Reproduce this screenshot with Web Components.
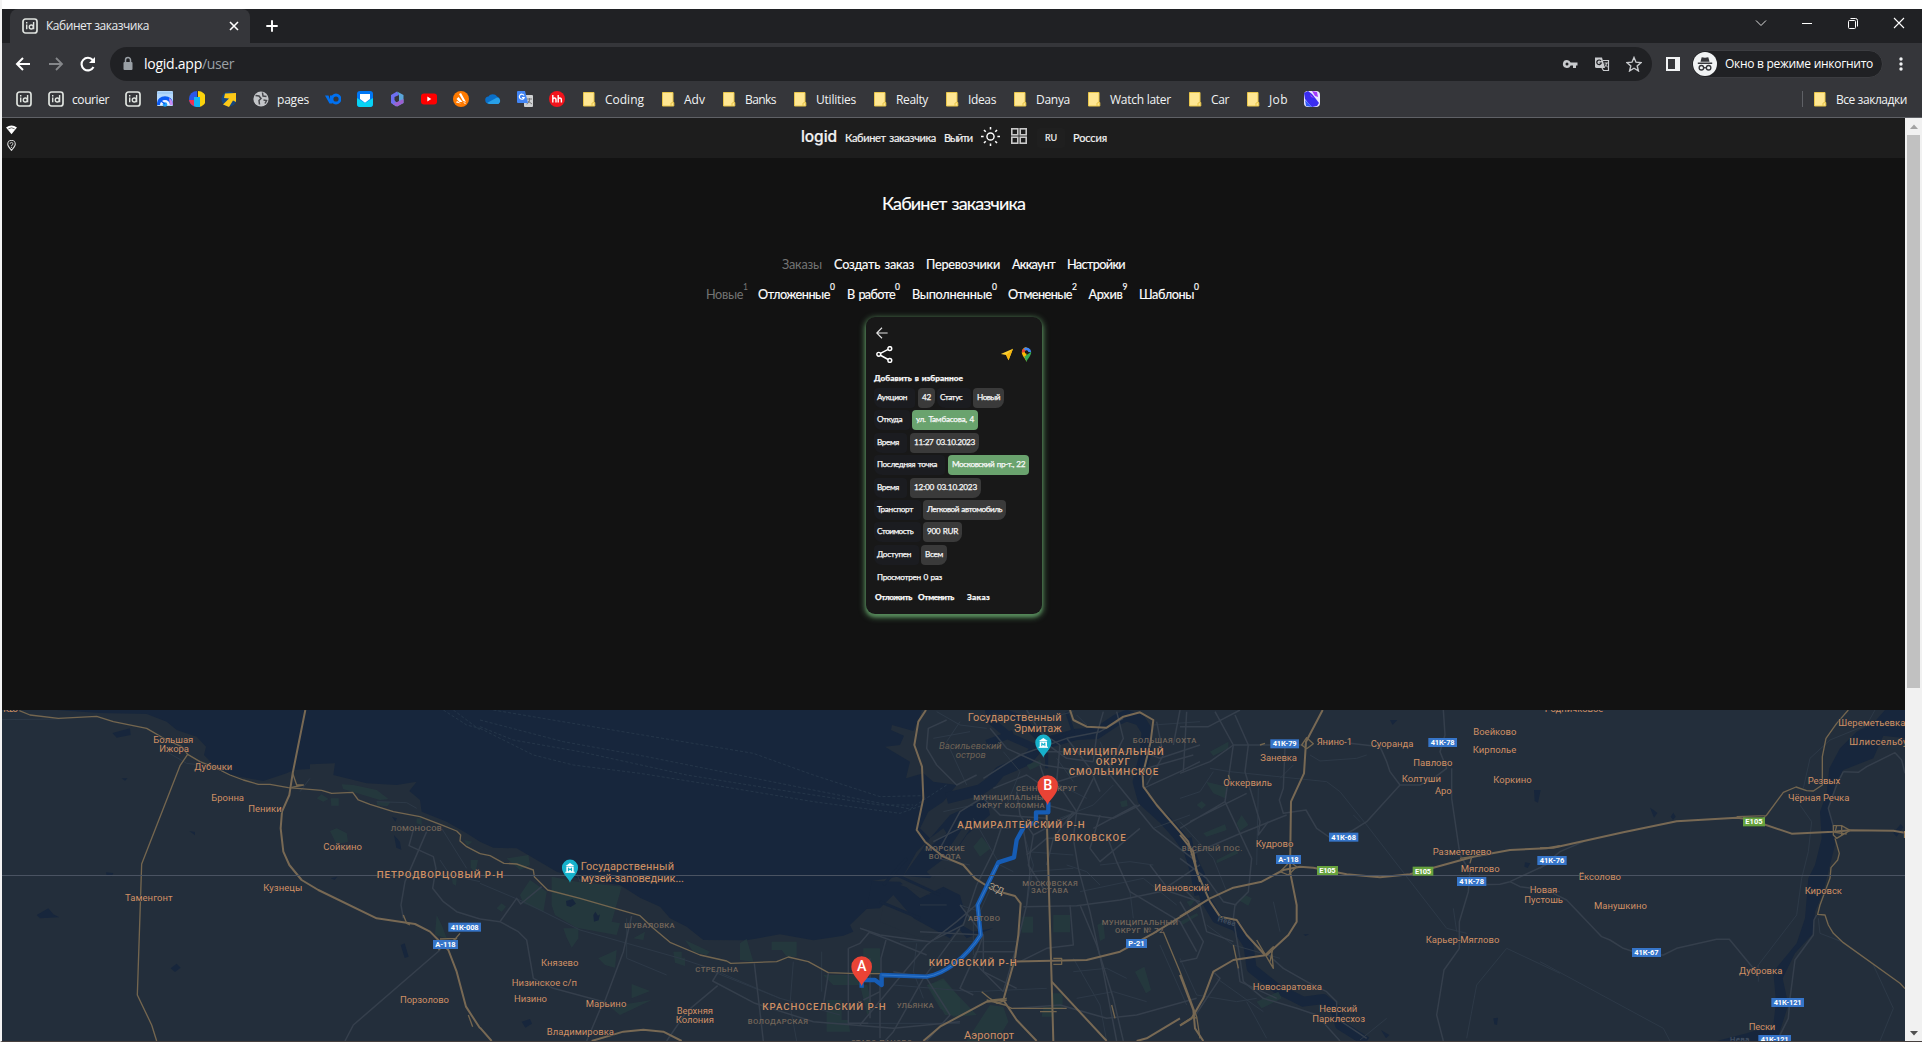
<!DOCTYPE html>
<html lang="ru">
<head>
<meta charset="utf-8">
<title>Кабинет заказчика</title>
<style>
html,body{margin:0;height:100%;overflow:hidden;background:#fff}
body{font-family:"Open Sans","Noto Sans",sans-serif}
</style>
</head>
<body>
<app-window></app-window>
<script>
const define=(name,html,after)=>customElements.define(name,class extends HTMLElement{
  connectedCallback(){
    if(this.shadowRoot)return;
    this.attachShadow({mode:'open'}).innerHTML=typeof html==='function'?html(this):html;
    if(after)after(this,this.shadowRoot);
  }
});

/* Text run that tracks its letters to fill a given width */
define('fit-text',el=>`<style>:host{display:inline-block;white-space:nowrap;flex:none;width:${el.getAttribute('w')}px}span{display:inline-block;white-space:nowrap}</style><span><slot></slot></span>`,
(el,root)=>{
  const s=root.querySelector('span'),w=+el.getAttribute('w');
  s.style.letterSpacing='0';
  const n=s.getBoundingClientRect().width;
  s.style.letterSpacing=((w-n)/el.textContent.trim().length)+'px';
});

const ID='<rect x="1" y="1" width="14" height="14" rx="2.5" fill="none" stroke="#dfe3df" stroke-width="1.7"/><g stroke="#dfe3df" stroke-width="1.4" fill="none"><path d="M4.7 6.5v4.8M4.7 4v1.4M11.6 4v7.3"/><circle cx="9.3" cy="9" r="2"/></g>';
const ICONS={
 id:ID,
 cloud:'<rect width="16" height="15" rx="1" fill="#b5d8fb"/><path d="M0 2h16" stroke="#8ec2f4"/><path d="M0 12a7.6 6.5 0 0 1 16 0v2h-4a4 4 0 0 0-8 0H0z" fill="#0b5cf5"/><path d="M13 14a5 5 0 0 0-10 0z" fill="#eef3ff"/><path d="M12 7a8 8 0 0 1 4 7l-3 0z" fill="#c98df2"/><circle cx="8" cy="13.5" r="2.3" fill="#1fa0f5"/><path d="M8 13 4 10" stroke="#0b5cf5" stroke-width="1.4"/>',
 pie:'<path d="M8 0a8 8 0 1 0 0 16z" fill="#2a57e8"/><path d="M9 0a8 8 0 0 1 0 16z" fill="#fbd30c"/><path d="M5 6h6v10a8 8 0 0 1-6-1z" fill="#12b4f2"/><path d="M0 9h5v6A8 8 0 0 1 0 9z" fill="#f03050"/>',
 arrow:'<circle cx="8" cy="8" r="7.6" fill="#16467e"/><path d="M4 2.500 15 2 15 11 12 9.500 8 16 2 13.500 8 7.500 3 7z" fill="#fcc918"/>',
 globe:'<circle cx="8" cy="8" r="7.6" fill="#c3c5c8"/><path d="M2.500 4.500 6 5l2 2.500-2 2 .5 4M9.500 1.500 10 5l3.500.5M10.500 9l3 .5-1.500 3" fill="none" stroke="#46474b" stroke-width="1.500"/>',
 yo:'<path d="M0 4.5h3.5l1.5 4v-4h2.5v8H4.500z" fill="#0070f0"/><circle cx="11" cy="8" r="4" fill="none" stroke="#0070f0" stroke-width="2.8"/>',
 mail:'<rect width="16" height="16" rx="3" fill="#0077f5"/><path d="M0 7l8 5 8-5v6a3 3 0 0 1-3 3H3a3 3 0 0 1-3-3z" fill="#08d3f4"/><path d="M3 3h10v5l-5 3.800L3 8z" fill="#fff"/>',
 m365:'<path d="M8 .5 2 4v8l5 3.500V11L5.500 9V6L10 4z" fill="#6d6ff0"/><path d="M8 .5 14.500 4v8L8 15.500 4 13l6-3V4z" fill="#5aa5d8"/><path d="M14.500 8v4L8 15.500 4 13l6-3z" fill="#9d5fd0"/><path d="M7 7l3-2v5l-3 1z" fill="#35363a"/>',
 yt:'<rect y="2.500" width="16" height="11" rx="3" fill="#f00"/><path d="M6.300 5.500v5l4-2.500z" fill="#fff"/>',
 avast:'<circle cx="8" cy="8" r="8" fill="#ff7a00"/><path d="M6 3l2-1 5 9-3-1zM3.500 8l2-2 4 5-3 0zM3 11.500l1-1.500 4 2.500zM10 11l3 1-1 1z" fill="#fff"/>',
 onedrive:'<path d="M4 12.500a3.500 3.500 0 0 1-.5-7A5 5 0 0 1 12 5.500a4 4 0 0 1 1.500 7z" fill="#0a6fc8"/><path d="M2 12 12 6.500a3.500 3.500 0 0 1 1.500 6.500H4z" fill="#28a0e8"/>',
 gt:'<rect x="7" y="4" width="9" height="12" rx="1" fill="#cfd1d3"/><path d="M10 8h5M12.500 7v2c0 2-2 4-3 4M11 10l4 3" stroke="#777" fill="none"/><path d="M0 1a1 1 0 0 1 1-1h7l3 12H1a1 1 0 0 1-1-1z" fill="#4285f4"/><path d="M7 4.500A2.500 2.500 0 1 0 7.200 6.500H5" stroke="#fff" fill="none" stroke-width="1.200"/>',
 hh:'<circle cx="8" cy="8" r="8" fill="#f2141c"/><path d="M3.800 4v7.500M3.800 9q0-2 1.600-2t1.600 2v2.500M9.200 4v7.500M9.200 9q0-2 1.600-2t1.600 2v2.500" stroke="#fff" stroke-width="1.400" fill="none"/>',
 folder:'<path d="M2.500 1.500h10.500v10h.8v3.500H2.500z" fill="#ffe793" stroke="#e9c64b"/><path d="M11 15v-3l2.500-.5" fill="none" stroke="#e9c64b"/>',
 swirl:'<rect width="16" height="16" rx="4" fill="#e9e5ff"/><path d="M0 2 4 0 8 3 12 8 15 12 13 15 8 16 4 12 1 8z" fill="#3a2cf0"/><path d="M8 0l5 1 1 5-3-1zM6 3l4 4-3-1z" fill="#a43bfa"/><path d="M1 9l4 4 3 3-6-1z" fill="#2f5bf8"/>',
 back:'<path d="M15 8H2M8 2 2 8l6 6" fill="none" stroke="currentColor" stroke-width="2"/>',
 fwd:'<path d="M1 8h13M8 2l6 6-6 6" fill="none" stroke="currentColor" stroke-width="1.800"/>',
 reload:'<path d="M13.500 11A6.300 6.300 0 1 1 12.700 4" fill="none" stroke="currentColor" stroke-width="2.100"/><path d="M15 1v6H9z" fill="currentColor"/>',
 lock:'<rect x="3.500" y="6" width="9" height="8" rx="1" fill="#9aa0a6"/><path d="M5.500 6V4a2.500 2.500 0 0 1 5 0v2" fill="none" stroke="#9aa0a6" stroke-width="1.500"/>',
 key:'<path d="M5 4a4 4 0 1 0 3.600 5.500H11V12h3V9.500h1.500v-3H8.600A4 4 0 0 0 5 4z" fill="#c8cacd"/><circle cx="5" cy="8" r="1.500" fill="#202124"/>',
 trans:'<path d="M1 1.500h7l3 10.500H2.500A1.500 1.500 0 0 1 1 10.500z" fill="#c8cacd"/><path d="M9 4.500h5.500v10H9.500L8 12" fill="none" stroke="#c8cacd" stroke-width="1.200"/><path d="M7 5A2.300 2.300 0 1 0 7.300 7H5.500" stroke="#202124" fill="none" stroke-width="1.200"/><path d="M10.500 7h3.500M12.500 7c0 2-1 3-2 4M11 8.500l3 3" stroke="#c8cacd" fill="none"/>',
 star:'<path d="M8 1.500l2 4.700 5 .4-3.800 3.300 1.200 5L8 12.200l-4.400 2.700 1.200-5L1 6.600l5-.4z" fill="none" stroke="#c8cacd" stroke-width="1.400"/>',
 panel:'<rect x="2" y="2" width="12" height="12" fill="none" stroke="#f1f3f4" stroke-width="2"/><path d="M10 2h4v12h-4z" fill="#f1f3f4"/>',
 dots:'<g fill="#f1f3f4"><circle cx="8" cy="3" r="1.700"/><circle cx="8" cy="8" r="1.700"/><circle cx="8" cy="13" r="1.700"/></g>',
 incog:'<circle cx="8" cy="8" r="8" fill="#f1f3f4"/><path d="M5 6.500 5.800 3.500l2.200.4 2.200-.4.800 3z" fill="#35363a"/><path d="M3.200 7.500h9.600" stroke="#35363a"/><g fill="none" stroke="#35363a" stroke-width=".9"><circle cx="5.600" cy="10.500" r="1.500"/><circle cx="10.400" cy="10.500" r="1.500"/><path d="M7 10.500h2"/></g>',
 close:'<path d="M4 4l8 8M12 4l-8 8" stroke="#fff" stroke-width="1.600"/>',
 plus:'<path d="M8 2.300v11.400M2.300 8h11.400" stroke="#fff" stroke-width="1.900"/>',
 chev:'<path d="M3 5.500l5 5 5-5" fill="none" stroke="#ddd"/>',
 min:'<path d="M3 8.500h10" stroke="#fff"/>',
 rest:'<rect x="3.500" y="5.500" width="7" height="8" rx="1" fill="none" stroke="#fff"/><path d="M5.500 3.500h5a2 2 0 0 1 2 2v6" fill="none" stroke="#fff"/>',
 x:'<path d="M3 3l10 10M13 3 3 13" stroke="#fff" stroke-width="1.100"/>',
 wifi:'<path d="M0 5q8-6 16 0L8 15z" fill="#fff"/><path d="M3.500 7q4.500-3 9 0" fill="none" stroke="#333"/>',
 loc:'<path d="M8 15C4 10 2.500 8.500 2.500 6a5.500 5.500 0 0 1 11 0c0 2.500-1.500 4-5.500 9z" fill="none" stroke="#ddd" stroke-width="1.500"/><path d="M6 5.500a2 2 0 1 1 2.500 2L8 9M8 10v1.500" fill="none" stroke="#ddd" stroke-width="1.300"/>',
 sun:'<circle cx="8" cy="8" r="3" fill="none" stroke="#fff" stroke-width="1.200"/><path d="M8 0v2.200M8 13.800V16M0 8h2.200M13.800 8H16M2.500 2.500 4 4M12 12l1.500 1.500M13.500 2.500 12 4M4 12l-1.500 1.500" stroke="#fff" stroke-width="1.300"/>',
 grid:'<g fill="none" stroke="#c9c9c9" stroke-width="1.600"><rect x=".8" y=".8" width="6" height="6"/><rect x="9.200" y=".8" width="6" height="6"/><rect x=".8" y="9.200" width="6" height="6"/><rect x="9.200" y="9.200" width="6" height="6"/></g>',
 share:'<g fill="none" stroke="#fff" stroke-width="1.400"><circle cx="2.600" cy="7.800" r="1.800"/><circle cx="13" cy="2.400" r="1.800"/><circle cx="13" cy="13.600" r="1.800"/><path d="M4.200 7 11.400 3.200M4.200 8.700l7.200 4"/></g>',
 left:'<path d="M15.500 8H1M8 1 1 8l7 7" fill="none" stroke="#e4e4e4" stroke-width="1.500"/>',
 nav:'<path d="M16 1 1 7.500l6.500 1.200L10.500 15z" fill="#fcd030"/><path d="M16 1 7.500 8.700 10.500 15z" fill="#f5b50f"/>',
 pin:'<path d="M8 16C7 12 3 9.500 3 5.500A5 5 0 0 1 8 .3z" fill="#fbbc04"/><path d="M3 6A5 5 0 0 1 5 1.500L8 5z" fill="#ea4335"/><path d="M5 1.500A5 5 0 0 1 13 5.500L8 5z" fill="#4285f4"/><path d="M13 5c0 5-4 7-5 11-1-3-1.800-4.500-2.500-5.500z" fill="#34a853"/><circle cx="8" cy="5.300" r="1.900" fill="#181818"/>',
 up:'<path d="M4 10.500 8 6l4 4.500z" fill="#a3a3a3"/>',
 down:'<path d="M4 6 8 10.500 12 6z" fill="#505050"/>'
};
define('ui-icon',el=>{const s=el.getAttribute('size')||16;return `<style>:host{display:block;flex:none;width:${s}px;height:${s}px}svg{display:block;width:100%;height:100%}</style><svg viewBox="0 0 16 16">${ICONS[el.getAttribute('name')]}</svg>`});

define('tab-strip',`<style>
:host{display:flex;height:34px;background:#202124;align-items:stretch;color:#e8eaed}
.tab{width:240px;margin-left:8px;background:#35363a;border-radius:8px 8px 0 0;display:flex;align-items:center;box-sizing:border-box;padding:0 8px 0 12px;font-size:12px}
fit-text{margin:-2px 0 0 8px}.tab ui-icon:last-child{margin-left:auto}
.new{margin:9px 0 0 14px}.win{margin-left:auto;display:flex;gap:30px;padding:6px 15px 0 0}
</style><div class="tab"><ui-icon name="id"></ui-icon><fit-text w="103">Кабинет заказчика</fit-text><ui-icon name="close"></ui-icon></div><ui-icon class="new" name="plus"></ui-icon>
<div class="win"><ui-icon name="chev"></ui-icon><ui-icon name="min"></ui-icon><ui-icon name="rest"></ui-icon><ui-icon name="x"></ui-icon></div>`);

define('tool-bar',`<style>
:host{display:flex;height:42px;background:#35363a;align-items:center;color:#fff;box-sizing:border-box;padding:0 13px 0 13px}
.omni{margin-left:14px;flex:1;height:34px;border-radius:17px;background:#202124;display:flex;align-items:center;font-size:14px;padding:0 10px 0 10px}
.omni fit-text{margin-top:-1px}
.path{color:#9aa0a6}.r{margin-left:auto;display:flex;gap:16px}
.pill{display:flex;align-items:center;height:26px;border-radius:14px;background:#202124;border:1px solid #3c3d41;padding:0 9px 0 1px;gap:8px;font-size:12px;margin:0 10px 0 10px}
</style><ui-icon name="back"></ui-icon><ui-icon name="fwd" style="margin-left:17px;color:#85878a"></ui-icon><ui-icon name="reload" style="margin-left:16px"></ui-icon>
<div class="omni"><ui-icon name="lock"></ui-icon><fit-text w="58" style="margin-left:8px">logid.app</fit-text><fit-text w="32" class="path">/user</fit-text><div class="r"><ui-icon name="key"></ui-icon><ui-icon name="trans"></ui-icon><ui-icon name="star"></ui-icon></div></div>
<ui-icon name="panel" style="margin-left:13px"></ui-icon><div class="pill"><ui-icon name="incog" size="24"></ui-icon><fit-text w="148" style="margin-top:-1px">Окно в режиме инкогнито</fit-text></div><ui-icon name="dots"></ui-icon>`);

define('book-mark',el=>`<style>:host{display:flex;align-items:center;gap:8px;flex:none;font-size:12px;color:#f1f3f4}</style><ui-icon name="${el.getAttribute('icon')}"></ui-icon>${el.hasAttribute('w')?`<fit-text w="${el.getAttribute('w')}">${el.getAttribute('label')}</fit-text>`:''}`);
const marks=[['id'],['id','courier',37],['id'],['cloud'],['pie'],['arrow'],['globe','pages',32],['yo'],['mail'],['m365'],['yt'],['avast'],['onedrive'],['gt'],['hh'],['folder','Coding',39],['folder','Adv',21],['folder','Banks',31],['folder','Utilities',40],['folder','Realty',32],['folder','Ideas',28],['folder','Danya',34],['folder','Watch later',61],['folder','Car',18],['folder','Job',19],['swirl']];
const bm=m=>`<book-mark icon="${m[0]}"${m[1]?` label="${m[1]}" w="${m[2]}"`:''}></book-mark>`;
define('bookmark-bar',()=>`<style>:host{display:flex;align-items:center;height:33px;padding:0 15px 4px 14px;gap:16px;background:#35363a;border-bottom:1px solid #5f6166;box-sizing:border-box}
.end{margin-left:auto;display:flex;gap:9px;align-items:center}.sep{width:1px;height:16px;background:#5f6166}</style>${marks.map(bm).join('')}<div class="end"><div class="sep"></div>${bm(['folder','Все закладки',71])}</div>`);

define('site-header',`<style>
:host{display:flex;height:40px;box-sizing:border-box;background:#1d1d1d;color:#f2f2f2;font:11px/16px Lato,"Open Sans",sans-serif;word-spacing:.1em;-webkit-text-stroke:.2px}
.st{display:flex;flex-direction:column;gap:5px;padding:6px 0 0 4px;width:795px;flex:none}
nav{display:flex;align-items:center}
.logo{font:500 15.500px/18px Inter,sans-serif;margin-top:-3px}
.ru{width:28px;height:20px;background:#1f1f1f;border-radius:3px;margin-left:10px;display:flex;align-items:center;justify-content:center;font-size:9px}
</style><div class="st"><ui-icon name="wifi" size="11"></ui-icon><ui-icon name="loc" size="11"></ui-icon></div>
<nav><fit-text class="logo" w="36">logid</fit-text><fit-text w="91" style="margin-left:8px">Кабинет заказчика</fit-text><fit-text w="28" style="margin-left:8px">Выйти</fit-text><ui-icon name="sun" size="19" style="margin:-4px 0 0 9px"></ui-icon><ui-icon name="grid" style="margin:-4px 0 0 11px"></ui-icon><div class="ru"><fit-text w="12">RU</fit-text></div><fit-text w="34" style="margin-left:8px">Россия</fit-text></nav>`);

const sub=[['Новые',37,1,3],['Отложенные',72,0,5,12],['В работе',48,0,5,12],['Выполненные',80,0,5,12],['Отмененые',64,2,5,11],['Архив',34,9,5,11.500],['Шаблоны',55,0,5,11.500]];
define('page-nav',()=>`<style>
:host{display:flex;flex-direction:column;color:#fff;font:12.700px/18px Lato,"Open Sans",sans-serif;width:1903px;word-spacing:.1em;-webkit-text-stroke:.15px}
h1{margin:34px 0 0 880px;font:400 18px/22px Lato,sans-serif;height:22px}
.a{display:flex;margin:41px 0 0 780px;height:18px}
.b{display:flex;margin:12px 0 0 704px;height:18px}.dim{color:#747474;-webkit-text-stroke:0}
.b div{display:flex}.b fit-text+fit-text{font-size:8.500px;line-height:9px;margin-top:-2px}
</style><h1><fit-text w="143">Кабинет заказчика</fit-text></h1>
<div class="a"><fit-text w="40" class="dim">Заказы</fit-text><fit-text w="80" style="margin-left:12px">Создать заказ</fit-text><fit-text w="74" style="margin-left:12px">Перевозчики</fit-text><fit-text w="43" style="margin-left:12px">Аккаунт</fit-text><fit-text w="58" style="margin-left:12px">Настройки</fit-text></div>
<div class="b">${sub.map((s,i)=>`<div class="${i?'':'dim'}" style="margin-left:${s[4]||0}px"><fit-text w="${s[1]}">${s[0]}</fit-text><fit-text w="${s[3]}">${s[2]}</fit-text></div>`).join('')}</div>`);

define('order-row',el=>{
  const c=el.getAttribute('cells').split(';').map(t=>t.split('|'));
  return `<style>:host{display:flex;height:20px}
  div{height:20px;line-height:19px;border-radius:4px;box-sizing:border-box}
  .l{background:#1b1c20;padding-left:3px}.v{background:#3a3a3a;padding-left:4px;border-bottom-right-radius:8px}.g{background:#6aa36e;padding-left:4px}.l{border-radius:4px 4px 4px 8px}</style>`
  +c.map(([k,t,w,tw,m])=>`<div class="${k}" style="width:${w}px;margin-left:${m||0}px"><fit-text w="${tw}">${t}</fit-text></div>`).join('');
});
define('order-card',`<style>
:host{display:block;box-sizing:border-box;width:176px;height:297px;margin:14px 0 0 864px;background:#181818;border-radius:9px;box-shadow:0 2px 6px 1px #5c9461,0 3px 3px #5c946180;padding:10px 8px;color:#f8f8f8;font:8.200px/12px Lato,"Open Sans",sans-serif;-webkit-text-stroke:.25px;word-spacing:.1em}
.t{display:flex;padding:0 2px;align-items:center}.t ui-icon:nth-child(2){margin-left:auto}
.rows{display:flex;flex-direction:column;gap:2.400px;margin-top:4px}b{font-weight:900}
.f{display:flex;margin-top:8px}
</style><ui-icon name="left" size="12" style="margin-left:2px"></ui-icon>
<div class="t" style="margin-top:7px"><ui-icon name="share" size="17"></ui-icon><ui-icon name="nav" size="13"></ui-icon><ui-icon name="pin" size="15" style="margin:0 -2px 0 6px"></ui-icon></div>
<b style="display:block;margin-top:9px;height:12px"><fit-text w="89">Добавить в избранное</fit-text></b>
<div class="rows">
<order-row cells="l|Аукцион|41|30;v|42|17|9|3;l|Статус|34|22|2;v|Новый|31|23|2"></order-row>
<order-row cells="l|Откуда|36|25;g|ул. Тамбасова, 4|66|58|2"></order-row>
<order-row cells="l|Время|33|22;v|11:27 03.10.2023|69|61|3"></order-row>
<order-row cells="l|Последняя точка|71|60;g|Московский пр-т., 22|81|73|3"></order-row>
<order-row cells="l|Время|33|22;v|12:00 03.10.2023|71|63|3"></order-row>
<order-row cells="l|Транспорт|47|36;v|Легковой автомобиль|83|75|2"></order-row>
<order-row cells="l|Стоимость|47|36;v|900 RUR|39|31|2"></order-row>
<order-row cells="l|Доступен|45|34;v|Всем|26|18|2"></order-row></div>
<div style="margin:6px 0 0 3px;height:12px"><fit-text w="65">Просмотрен 0 раз</fit-text></div>
<b class="f"><fit-text w="37" style="margin-left:1px">Отложить</fit-text><fit-text w="36" style="margin-left:6px">Отменить</fit-text><fit-text w="23" style="margin-left:13px">Заказ</fit-text></b>`);

/* Map. Tiles are drawn at three times the size, each in its own group. */
const T=(o,s)=>`<g transform="translate(${o} 705) scale(.33333)">${s}</g>`;
const P=(cls,...d)=>d.map(x=>`<path class="${cls}" d="M${x}"/>`).join('');
const L=(cls,list)=>list.map(([t,a,b,y])=>`<text class="${cls}" x="${a}" y="${y+(cls.includes('big')?11:9.500)}" textLength="${b-a}">${t}</text>`).join('');
const B=(c,list)=>list.map(([t,x,y,w])=>`<rect x="${x}" y="${y}" width="${w}" height="27" fill="${c}"/><text class="bd" x="${x+7}" y="${y+21}" textLength="${w-14}">${t}</text>`).join('');
const pin=(x,y,c,s,inner)=>`<g transform="translate(${x} ${y}) scale(${s})"><path d="M0 0C-4-16-31-32-31-58a31 31 0 0 1 62 0C31-32 4-16 0 0z" fill="${c}"/>${inner}</g>`;
const museum='<path d="M-17-63 0-75 17-63zM-14-61h28v22h-28z" fill="#fff"/><path d="M-6-43v-12L0-48 6-55v12" fill="none" stroke="#17b1cb" stroke-width="4"/><path d="M-18-39h36" stroke="#fff" stroke-width="4"/>';
define('route-map',()=>{
const water=T(0,`
<path fill="#17263c" d="M170 15 300 24 440 27 500 50 530 75 590 95 618 125 612 150 660 200 720 215 790 228 860 205 880 195 930 192 930 178 1005 175 1000 210 1100 235 1190 240 1250 230 1228 258 1260 285 1265 320 1340 350 1400 385 1440 410 1480 428 1550 430 1610 465 1670 500 1750 525 1860 540 1920 578 1980 605 2010 640 2060 665 2110 705 2240 706 2340 688 2440 706 2530 692 2560 680 2550 660 2600 612 2630 560 2616 528 2710 512 2750 440 2790 400 2760 370 2785 320 2830 290 2870 240 2800 230 2770 205 2718 220 2730 170 2680 140 2655 125 2700 120 2712 92 2673 75 2676 60 2740 78 2762 30 2765 15z"/>
<path fill="#17263c" d="M2790 400 2850 330 2960 280 2970 330 2900 390 2860 450 2790 520 2710 512zM2616 528 2700 530 2760 580 2830 545 2880 570 2900 640 2850 700 2740 640 2680 570 2640 610 2600 612zM2850 640 2920 680 2980 670 2900 700z"/>
<path fill="#17263c" d="M337 84 390 70 392 90 350 98zM110 630 145 610 160 628 178 637 120 640zM512 790 530 776 542 788 525 801zM365 220l18 0-8 7zM568 378l17 3 0 10zM318 502l22 2-4 10-16-2zM992 520l20-5-8 10zM1202 720l12-5 12 40-12 4zM1182 390l18 20 4 24-15-6zM1176 335l15 5-5 10z"/>
<path fill="#232e3b" d="M2840 440 2900 350 2915 365 2850 460zM2780 500 2860 440 2880 455 2800 520zM2700 540 2760 520 2790 570zM2650 600 2720 620 2790 690 2760 700 2640 650zM2790 400 2830 370 2840 385 2770 440z"/>`)
+T(860,`<g fill="none" stroke="#17263c"><path stroke-width="34" d="M260 280 360 255 395 230 420 200 500 165 530 130 570 110 650 88 710 85 770 45 800 32 840 45 862 80 855 150 835 230 850 285 910 340 955 390 990 440 1010 510 1020 570"/><path stroke-width="22" d="M530 130 450 95 390 45 385 10M460 85 380 115M400 10 480 40 540 100"/><path stroke-width="9" d="M620 20 640 80 560 110M560 140v50M140 460 70 540M110 510l130 60M60 590l120 50"/></g>`)
+T(1180,`<g fill="none" stroke="#17263c" stroke-linejoin="round"><path stroke-width="30" d="M20 400 30 450 60 510 75 580 110 640 170 665 205 720 215 790 290 850 370 890 430 882 465 910 480 960 560 1010"/></g><path fill="#17263c" d="M1062 255l20 0-8 38-10-5zM940 940l14-2-3 22-8-2zM603 975l25 15-10 10zM630 45l22 0-14 15zM1035 472l16 3-8 14-10-4zM370 688l18 0-12 5z"/>`)
+T(1540,`<path fill="#17263c" d="M1095 15 1035 15 1000 55 950 80 900 130 868 190 860 265 840 320 845 400 825 480 805 520 795 640 770 715 700 800 708 890 700 960 620 985 530 1008 710 1008 745 900 728 820 765 745 820 685 825 620 850 560 870 480 885 420 880 360 865 310 885 240 910 195 1000 160 1030 92 1095 100zM330 308l12 8 10 8-10 14zM392 335l8-12 7 12-8 10zM1060 385l22-28 8 10-20 28z"/>`);
const park=T(0,P('pk','1025 238 1060 240 1130 255 1165 282 1140 285 1030 252z','950 280 965 268 985 282 970 290z','992 280h24v22h-22z','990 378 1010 370 1040 385 1044 410 1010 418z','1130 290h42l-10 14-30-3z','1310 630 1325 660 1340 700 1305 690z','1250 340 1265 340 1265 360 1250 355z','1392 405l25 5-15 12z','1412 465l22 0-8 40-14-18z','1356 520l14 0-2 22-10-6z'))
+T(480,P('pk','80 460 145 450 150 480 120 495z','120 570 150 525 200 560 190 620 130 595z','215 515 290 530 425 545 395 650 420 655 410 690 290 668 225 630 215 600z','250 670h45v30l-20 28-15-30z','355 760 410 735 405 788 375 780z','460 700 495 680 490 705z','615 705 690 740 680 750 640 740z','780 715 800 702 820 770 780 765z','875 710 950 710 950 755 920 755 905 735 875 735z','455 837 510 858 455 880z','390 905 515 885 420 930z','1150 730h50v78h-50z','1030 810h110v30h-80z','1040 885h45v60h20l5 35h-70v-30z','1140 840l22 0 15 70-15 20z','1345 840 1390 820 1440 880 1440 930 1395 930z','50 610 65 595 78 605 65 620z','580 740h25v18h10v25l-30-10z')+'<path fill="#17263c" d="M258 588l20-6 10 14-16 10-12-4zM340 630l6-10 8 12 6-4-4 18-14 4zM125 950l25-8 6 14-20 12z"/>')
+T(860,P('pk','340 425 365 395 392 430 360 455z','485 635h34v48h-34z','580 630h50v52h-50z','200 840 250 825 350 930 280 935 240 910z','320 1008 390 900 430 905 445 950 410 1008z','578 865h30v48h-30z','780 290l20-5 3 18-18 4z','712 660l18-10 5 50-15 8z','550 905h30v30h-35z','825 800l28-15 20 70-15 10z','500 180 540 165 545 178 510 195z'))
+T(1180,P('pk','90 140 145 110 145 130 100 152z','78 230 140 245 135 280 100 265z','50 300 65 288 78 300 65 312z','70 385 135 358 140 375 80 395z','110 465 170 435 175 445 110 475z','170 355 185 330 205 360 180 378z','175 585 195 570 215 580 205 602z','230 890 295 860 305 880 245 910z','20 590 50 580 30 605z','0 650l50-25 5 6-50 30z'));
const lanes=T(0,P('fer','1330 15 1400 60 1440 70','1360 15 1440 75')+P('thin','6 44 180 42','500 140 560 175 600 180','1325 370 1400 490','1320 465 1350 510 1440 530','900 260 930 220','1130 290 1220 293 1250 310')+P('gr','1240 375 1227 422 1300 455 1308 490 1298 550 1330 590 1370 620 1440 642','1280 380 1215 530 1203 600 1210 640','1320 735 1060 960 1035 1008'))
+T(480,P('fer','40 15 200 42 500 92 820 145 1000 210 1200 275 1330 272','0 45 250 110 500 155 750 205 1100 275 1290 312 1400 240','0 65 100 105 300 140 620 210 900 255 1200 300 1300 300','0 70 160 150 280 180 480 205 700 240 1000 290 1260 325 1330 300')+P('thin','0 535 130 590 300 675 600 760 690 790 900 880','440 640 440 760 560 810','1025 740v120','700 800 900 880 1080 930','300 530 280 480','1310 715 1300 800 1330 880','940 770 930 900 950 1008','1040 955h400')+P('gr','0 642 60 650 115 680 140 705 160 820 220 850 370 890 320 1008','60 650 110 580 122 597 185 545','455 633 430 740 370 900','715 800 698 828 825 895 1000 950 1240 970 1440 950','713 842 620 920 560 1008','823 775 850 1008','1045 805 1030 900','1105 730v225h60','1105 730 1140 715 1168 682 1230 705 1340 750','1200 810v190','1218 705 1203 760 1203 810','1440 670 1330 820 1240 980 1215 1008','1150 885 1200 860','1170 760 1170 940'))
+T(860,P('thin','230 20 300 60 380 70','220 100 330 80M300 50 260 110 320 240','250 320 340 300M340 340 420 480 460 500','400 530 360 620 300 600','120 710h350','230 460 330 480','480 350 520 480 500 600M620 480 680 500 720 540','720 480 810 470 880 480M660 560 850 520 950 600','500 440 640 450M510 500 640 490','640 800 740 790 800 820M650 880 760 860 860 890','640 760 720 900 740 1008M810 560 820 640','100 840 340 860 560 850M340 650v100','430 140 480 200 440 300M590 160 640 230M600 340 700 300 760 240','580 230 680 280M880 370 990 330M180 600h80','900 720 980 900M880 60 1020 50M720 110l40 90','650 30 680 60M560 40 640 20')
+P('gr','260 45 205 70 200 130 230 180 290 240 350 210','370 220 480 150 620 100 720 80 790 40','390 70 440 130 550 180 740 210 860 190 1000 150','620 100 690 190 720 260','550 110 620 160 700 170','540 180 560 240 690 200','400 250 500 210 560 250','470 260 480 330 520 390 650 320','560 300 650 325 760 340 840 300','650 320 640 400 655 490 690 620 730 800 770 1008','640 320 580 400 560 480','700 220 650 320 600 370','750 210 880 370 1010 470','720 330 690 430 720 470 840 370','740 390 770 470 810 560 960 650 1010 740','430 350 400 440 350 540','490 370 510 500 500 600 465 740 430 860','220 410 300 370 450 370','240 430 300 320 380 270','360 590 290 650 200 720 100 840 0 960','350 540 310 660 210 710 60 690 0 670','490 605 650 602 780 585 900 560 1020 480','540 140 850 140 900 160 1020 120','700 170 710 90 730 20M770 20 790 100 740 200','630 600 640 720 560 730 480 770','660 600 710 720 760 880 790 1008','180 680 370 690 340 770 430 860','500 15 540 80 600 120','850 250 960 200 1020 170','890 50 910 150 860 240M960 15 940 120','470 740 350 740 300 850 340 870','100 800 200 820 270 930 200 1008','460 910 600 900 740 940 830 930 1010 880','700 370 830 300','520 390 505 480 550 550','640 400 560 400 500 450','600 120 590 230 650 320','300 600 370 690 370 800 470 850','560 340 420 330 370 280M870 480 930 560 1020 590'))
+T(1180,P('thin','90 190 150 200 440 230 480 260 560 360 800 670 860 685','390 150 420 168 530 160 560 150','340 180 300 220M0 280 60 260 100 200','860 1000 890 840 980 730 1140 805','540 1005 620 940M0 760 50 870 170 890 230 880','200 890 260 1000M80 660 160 720 300 760M280 590 300 680','820 610 830 680M0 350 100 460 140 560','110 820 250 920M540 350 520 330M235 250 230 480')+P('gr','0 65h85l95-50M105 20 160 120 135 290 215 460 205 560 165 600 160 640','160 120 90 170 0 205','160 120h220M165 30 205 120 195 200 240 350 235 390 265 350','30 350 200 265M135 290 0 370M320 330 170 390 30 450','315 125 310 250 298 285 310 325 378 315 410 370 460 405 520 375 560 350 660 240 720 240 760 220 800 190 780 140 795 90 790 15','510 115 600 125 620 170 630 200 660 240','815 190 815 280 840 450 870 500 865 560 838 650 838 730 792 795 770 930 790 1008','870 540 960 538 990 530 1140 460','990 530 1020 545 1140 560','0 460 80 520 130 590 170 600M0 540 60 600 80 680 160 710','20 20 10 200M0 590 70 710 50 760 0 770','160 640 180 760 190 830 250 880 350 910 410 930 480 1008','265 750 310 790 380 830 440 860 470 890 470 940 560 1000','40 940 120 820 100 800M170 760 180 830 290 880'))
+T(1540,P('thin','0 770 370 970 390 1008','1005 15 980 60 870 105 810 160 790 250M780 300 815 350 805 440 785 520 770 630 655 780 655 830','835 640 840 685 905 710M1000 780 1060 910 1020 1008','655 780 640 800')+P('gr','0 490 60 440 130 410M40 565 80 585 185 695 210 705 250 730 310 750 370 750 410 730 530 703 568 703 640 790','830 630 822 645 820 690 765 765 750 880 745 940 715 1000M910 200 955 202 980 185 1065 143 1085 165 1095 205','910 200 890 240 865 310 882 370'));
const roads=T(0,P('hw2','58 17 90 30 175 40 290 34 340 50 440 70 500 105 545 125 563 148 600 170 650 190 690 210 730 225 775 238 810 238 865 248 965 256 995 265 1058 262 1075 285 1110 298 1180 320 1260 335 1330 362 1370 378 1382 390 1380 408 1400 425 1440 446','563 148 540 182 425 477 412 870 455 960 470 1008')+P('hw','916 15 878 205 868 270 846 320 842 370 850 440 868 480 905 525 955 555 1130 640 1245 657 1290 680 1345 735 1370 800 1398 905 1440 970')+P('hw2','878 205 890 240 910 240 875 247','1210 630 1220 655 1230 660','1320 702 1370 700 1315 735M1380 685 1350 720M1405 930 1418 965'))
+T(480,P('hw2','0 446 30 452 72 475 110 477 160 495 163 515 203 555 300 580 480 632 520 670 570 712 660 750 740 768 752 775 890 770 925 756 985 770 1045 803 1130 806 1200 806')+P('hw','0 968 35 1008M335 1008 430 980 490 974 550 980 605 1008'))
+T(860,P('hw','198 15 175 50 163 120 186 185 190 280 170 375 195 410 250 455 310 480 345 520 400 555 465 573 482 595 475 690 465 760 430 885','630 15 640 45 680 65 740 68 790 35 840 22 880 45 872 110 848 210 850 245 890 300 985 410 1020 530','560 330 575 830 580 1008','575 830 740 1008','190 1008 240 965 380 890 430 885 470 945 530 1008','460 770 680 765 780 740 880 685 1020 600','960 940 860 1000 830 1008')+P('hw2','380 885 435 900 455 910 560 910 620 910M540 920h50M365 860l30 25 45-5M580 760h25v18h-25M390 880l20 15 30-10M910 680 960 800 1010 935 1020 1000M400 890 440 880M755 900l10 40'))
+T(1180,P('hw','428 15 378 110 372 205 333 290 330 500 350 600 350 650 325 690 260 750 160 765 100 800 70 880 35 940 0 962','0 635 90 580 160 548 245 530 310 495 360 485 400 488 500 508 600 517 690 508 790 480 880 455 990 435 1100 430 1140 423','0 390 40 440 50 500 90 590 120 635 170 645 200 690 255 750','0 810 40 915 45 970 70 1008')+P('hw2','240 120l15-5M365 120l15-22 20 18-20 15zM255 750 280 725 270 770M160 720 175 790M300 500l30-30 20 15-25 25zM230 705 280 790 275 740M840 460l35-5-5 20M0 960l40-25 10 5M145 210l5 15'))
+T(1540,P('hw','0 430 40 428 250 382 410 349 590 338 625 342 755 386 880 380 930 376 1060 377 1095 383')+P('hw2','925 15 890 55 858 100 847 155 847 240 820 258 800 257 768 246 730 262 680 330 655 355M590 335 680 332','885 400 898 445 893 465 873 488 870 520 840 600 833 628 855 630 865 660 880 685 910 713 1080 835 1095 851','880 362 905 362 930 376 890 400 880 390zM905 362v30M890 362l-5 20 35 5'));
const route=T(860,`<g fill="none" stroke="#165cb4" stroke-width="13" stroke-linejoin="round"><path d="M5 848V825H45L65 840V810L200 815Q240 810 285 775T362 690L353 600 415 472 462 457 470 405 492 365 528 352V322H565V292"/></g><path fill="none" stroke="#3478c8" stroke-width="3" d="M65 810 200 815Q240 810 285 775T362 690L353 600 412 480"/>`);
const labels=T(0,L('n',[['ково',10,54,12],['Большая',460,580,104],['Ижора',478,567,133],['Дубочки',583,697,186],['Бронна',634,732,280],['Пеники',745,845,312],['Сойкино',970,1086,427],['Кузнецы',790,907,549],['Таменгонт',375,518,578],['Порзолово',1200,1347,884]])+L('n dm',[['ЛОМОНОСОВ',1172,1325,368]])+L('n dist',[['ПЕТРОДВОРЦОВЫЙ Р-Н',1130,1509,510]])+B('#3675c9',[['41К-008',1345,653,98],['А-118',1299,705,75]]))
+T(480,L('n',[['Князево',183,295,773],['Низинское с/п',95,291,835],['Низино',102,201,881],['Марьино',317,439,898],['Верхняя',590,699,917],['Колония',587,702,946],['Владимировка',200,402,982]])+L('n big',[['Государственный',302,582,484],['музей-заповедник...',302,612,519]])+L('n dm',[['ШУВАЛОВКА',433,584,659],['СТРЕЛЬНА',646,774,791],['УЛЬЯНКА',1250,1361,901],['ВОЛОДАРСКАЯ',803,984,949],['СТАРО-ПАНОВО',1112,1296,1012]])+L('n dist',[['КРАСНОСЕЛЬСКИЙ Р-Н',847,1217,907]])+pin(270,533,'#17b1cb',.78,`<g transform="translate(0 -1)">${museum}</g>`))
+T(860,L('n big',[['Государственный',323,605,36],['Эрмитаж',461,605,70],['Аэропорт',312,462,990]])+L('n it',[['Васильевский',237,425,122],['остров',287,377,150]])+L('n dm',[['БОЛЬШАЯ ОХТА',818,1009,104],['СЕННОЙ ОКРУГ',468,652,250],['МУНИЦИПАЛЬНЫЙ',340,568,277],['ОКРУГ КОЛОМНА',349,554,299],['МОРСКИЕ',196,314,430],['ВОРОТА',206,302,452],['МОСКОВСКАЯ',487,653,534],['ЗАСТАВА',513,624,556],['АВТОВО',324,420,640],['МУНИЦИПАЛЬНЫЙ',725,954,652],['ОКРУГ № 72',765,910,674]])+L('n dist',[['МУНИЦИПАЛЬНЫЙ',608,911,142],['ОКРУГ',707,810,171],['СМОЛЬНИНСКОЕ',626,895,200],['АДМИРАЛТЕЙСКИЙ Р-Н',292,674,359],['ВОЛКОВСКОЕ',583,797,398],['КИРОВСКИЙ Р-Н',206,470,774]])+L('n',[['Ивановский',883,1048,549]])+`<text class="n" style="fill:#b9a58a" transform="translate(383 550) rotate(24)" textLength="48">ЗСД</text>`+B('#3675c9',[['Р-21',798,702,63]])+pin(550,158,'#17b1cb',.78,`<g transform="translate(0 -1)">${museum}</g>`)+pin(563,300,'#ea4335',1,'<text class="pt" x="0" y="-45">B</text>')+pin(5,843,'#ea4335',1,'<text class="pt" x="0" y="-45">A</text>'))
+T(1180,L('n',[['Янино-1',410,516,110],['Суоранда',572,700,117],['Воейково',880,1009,81],['Кирполье',878,1009,134],['Заневка',241,351,160],['Павлово',700,817,174],['Колтуши',665,783,222],['Коркино',940,1055,225],['Аро',765,815,259],['Оккервиль',130,276,234],['Кудрово',227,340,416],['Разметелево',758,934,441],['Мяглово',842,959,491],['Карьер-Мяглово',737,958,705],['Новосаратовка',218,426,845],['Невский',418,532,912],['Парклесхоз',397,555,941],['Новая',1049,1132,556],['Пустошь',1033,1149,585]])+L('n dm',[['ВЕСЁЛЫЙ ПОС.',5,187,428]])+`<text class="n" style="fill:#46566b;font-size:22px" transform="translate(112 648) rotate(16)" textLength="55">Нева</text>`+B('#3675c9',[['41К-79',271,103,86],['41К-78',745,99,86],['41К-68',447,383,88],['А-118',288,450,75],['41К-76',1072,453,88],['41К-78',831,516,88]])+B('#66a23e',[['E105',411,483,63],['E105',698,485,62]]))
+T(1540,L('n',[['Родничковое',14,190,12],['Шереметьевка',895,1096,54],['Шлиссельбург',928,1132,112],['Резвых',803,901,229],['Чёрная Речка',744,928,280],['Ёксолово',116,243,515],['Манушкино',162,321,604],['Кировск',794,906,558],['Дубровка',597,727,799],['Пески',626,706,967],['М',1090,1114,389]])+`<text class="n" style="fill:#46566b;font-size:22px" x="570" y="1010" textLength="58">Нева</text>`+B('#3675c9',[['41К-67',276,729,87],['41К-121',694,879,98],['41К-121',655,990,98]])+B('#66a23e',[['E105',609,337,66]]));
return `<style>:host{display:block;height:331px;width:1903px}svg{display:block}
path{stroke-linejoin:round}
.pk{fill:#263c3f;fill-opacity:.75}.fer,.thin,.gr,.hw,.hw2{fill:none}
.fer{stroke:#2c3e50;stroke-width:2;stroke-dasharray:9 6}.thin{stroke:#2d3947;stroke-width:3}.gr{stroke:#353f4c;stroke-width:4.500}
.hw{stroke:#786954;stroke-width:6}.hw2{stroke:#74664f;stroke-width:4}
text{font-family:Roboto,sans-serif}.n{fill:#d09063;font-size:28.500px;paint-order:stroke;stroke:#242f3e;stroke-width:3px}
.dm{fill:#74665a;font-size:23px;font-weight:500;stroke:none}.dist{font-weight:500;font-size:29px}.big{font-size:33px}.it{fill:#6f6356;font-style:italic;stroke:none}
.bd{fill:#fff;font-size:22.500px;font-weight:700}.pt{fill:#fff;font-size:43px;font-weight:500;text-anchor:middle}</style>
<svg width="1903" height="331" viewBox="2 710 1903 331"><rect x="2" y="710" width="1903" height="331" fill="#232e3b"/>${water}${park}${lanes}${roads}${route}<path d="M2 875.500H1905" stroke="#4a5362"/>${labels}</svg>`});

define('scroll-bar',`<style>:host{display:flex;flex-direction:column;width:17px;background:#f1f1f1;align-items:center;flex:none;justify-content:space-between}
div{display:flex;flex-direction:column;align-items:center}i{width:13px;height:553px;background:#c1c1c1}</style><div><ui-icon name="up" style="height:17px"></ui-icon><i></i></div><ui-icon name="down"></ui-icon>`);

define('app-window',`<style>
:host{display:flex;flex-direction:column;width:1922px;height:1042px;box-sizing:border-box;border-left:2px solid #f3f3f3;padding-top:9px;border-bottom:1px solid #453f3e}
.view{display:flex;flex:1;min-height:0}main{width:1903px;display:flex;flex-direction:column;background:#121212}
route-map{margin-top:auto}
</style><tab-strip></tab-strip><tool-bar></tool-bar><bookmark-bar></bookmark-bar>
<div class="view"><main><site-header></site-header><page-nav></page-nav><order-card></order-card><route-map></route-map></main><scroll-bar></scroll-bar></div>`);
</script>
</body>
</html>
